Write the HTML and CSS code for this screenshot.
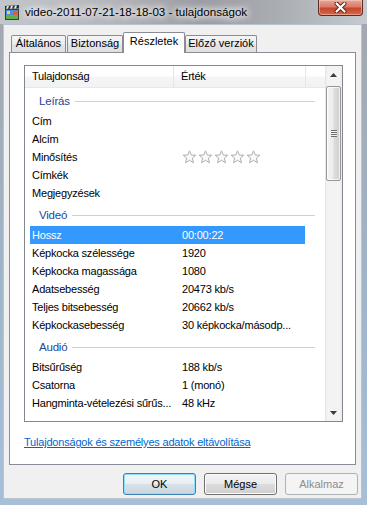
FILE: index.html
```html
<!DOCTYPE html>
<html lang="hu">

<head>
  <meta charset="UTF-8">
  <title>video-2011-07-21-18-18-03 - tulajdonságok</title>
  <link rel="stylesheet" href="styles.css">
</head>

<body>
  <div class="window">

    <div class="titlebar">
      <svg class="app-icon" width="16" height="16" viewBox="0 0 16 16">
        <rect x="1" y="4" width="14" height="11" fill="#3b3b3b"/>
        <rect x="2" y="5" width="12" height="9" fill="#4f8fd8"/>
        <rect x="2" y="10" width="12" height="4" fill="#5fb04a"/>
        <rect x="3" y="6" width="3" height="3" fill="#f3d04a"/>
        <rect x="9" y="7" width="4" height="3" fill="#e45a3a"/>
        <polygon points="1,1 15,0 15,3.5 1,4" fill="#2e2e2e"/>
        <polygon points="3,1 5,1 4,3.8 2,3.8" fill="#e8e8e8"/>
        <polygon points="7,0.8 9,0.7 8,3.7 6,3.7" fill="#e8e8e8"/>
        <polygon points="11,0.5 13,0.4 12,3.6 10,3.6" fill="#e8e8e8"/>
      </svg>
      <span class="title">video-2011-07-21-18-18-03 - tulajdonságok</span>
      <div class="close-btn">
        <svg width="13" height="11" viewBox="0 0 13 11">
          <path d="M2.5 1.5 L10.5 9.5 M10.5 1.5 L2.5 9.5" stroke="#5a2018" stroke-width="4" stroke-linecap="round"/>
          <path d="M2.5 1.5 L10.5 9.5 M10.5 1.5 L2.5 9.5" stroke="#ffffff" stroke-width="2.2" stroke-linecap="round"/>
        </svg>
      </div>
    </div>

    <div class="client">
      <div class="tabs">
        <div class="tab tab-general">Általános</div>
        <div class="tab tab-security">Biztonság</div>
        <div class="tab tab-details active">Részletek</div>
        <div class="tab tab-versions">Előző verziók</div>
      </div>

      <div class="pane">
        <div class="listbox">
          <div class="list">
            <div class="list-header">
              <div class="head-name">Tulajdonság</div>
              <div class="head-value">Érték</div>
              <div class="head-rest"></div>
            </div>

            <div class="group">Leírás</div>
            <div class="row"><div class="name">Cím</div><div class="value"></div></div>
            <div class="row"><div class="name">Alcím</div><div class="value"></div></div>
            <div class="row">
              <div class="name">Minősítés</div>
              <div class="value stars">
                <svg width="15" height="14" viewBox="0 0 15 14"><polygon class="star" points="7.5,0.8 9.3,5 13.8,5.2 10.3,8.1 11.5,12.8 7.5,10.2 3.5,12.8 4.7,8.1 1.2,5.2 5.7,5"/></svg>
                <svg width="15" height="14" viewBox="0 0 15 14"><polygon class="star" points="7.5,0.8 9.3,5 13.8,5.2 10.3,8.1 11.5,12.8 7.5,10.2 3.5,12.8 4.7,8.1 1.2,5.2 5.7,5"/></svg>
                <svg width="15" height="14" viewBox="0 0 15 14"><polygon class="star" points="7.5,0.8 9.3,5 13.8,5.2 10.3,8.1 11.5,12.8 7.5,10.2 3.5,12.8 4.7,8.1 1.2,5.2 5.7,5"/></svg>
                <svg width="15" height="14" viewBox="0 0 15 14"><polygon class="star" points="7.5,0.8 9.3,5 13.8,5.2 10.3,8.1 11.5,12.8 7.5,10.2 3.5,12.8 4.7,8.1 1.2,5.2 5.7,5"/></svg>
                <svg width="15" height="14" viewBox="0 0 15 14"><polygon class="star" points="7.5,0.8 9.3,5 13.8,5.2 10.3,8.1 11.5,12.8 7.5,10.2 3.5,12.8 4.7,8.1 1.2,5.2 5.7,5"/></svg>
              </div>
            </div>
            <div class="row"><div class="name">Címkék</div><div class="value"></div></div>
            <div class="row"><div class="name">Megjegyzések</div><div class="value"></div></div>

            <div class="group">Videó</div>
            <div class="row selected"><div class="name">Hossz</div><div class="value">00:00:22</div></div>
            <div class="row"><div class="name">Képkocka szélessége</div><div class="value">1920</div></div>
            <div class="row"><div class="name">Képkocka magassága</div><div class="value">1080</div></div>
            <div class="row"><div class="name">Adatsebesség</div><div class="value">20473 kb/s</div></div>
            <div class="row"><div class="name">Teljes bitsebesség</div><div class="value">20662 kb/s</div></div>
            <div class="row"><div class="name">Képkockasebesség</div><div class="value">30 képkocka/másodp...</div></div>

            <div class="group">Audió</div>
            <div class="row"><div class="name">Bitsűrűség</div><div class="value">188 kb/s</div></div>
            <div class="row"><div class="name">Csatorna</div><div class="value">1 (monó)</div></div>
            <div class="row"><div class="name">Hangminta-vételezési sűrűs...</div><div class="value">48 kHz</div></div>

            <div class="group">Média</div>
          </div>

          <div class="scrollbar">
            <div class="arrow-btn">
              <svg width="7" height="4" viewBox="0 0 7 4"><polygon points="3.5,0 7,4 0,4" fill="#3c3c3c"/></svg>
            </div>
            <div class="thumb"><div class="grip"></div></div>
            <div class="track"></div>
            <div class="arrow-btn">
              <svg width="7" height="4" viewBox="0 0 7 4"><polygon points="0,0 7,0 3.5,4" fill="#3c3c3c"/></svg>
            </div>
          </div>
        </div>

        <a class="remove-link" href="#">Tulajdonságok és személyes adatok eltávolítása</a>
      </div>

      <div class="buttons">
        <button class="btn btn-default">OK</button>
        <button class="btn">Mégse</button>
        <button class="btn" disabled>Alkalmaz</button>
      </div>
    </div>

  </div>
</body>

</html>
```

FILE: styles.css
```css
* {
  box-sizing: border-box;
}

body {
  margin: 0;
  width: 367px;
  height: 505px;
  overflow: hidden;
  font-family: "Liberation Sans", Arial, sans-serif;
  font-size: 11px;
  color: #000;
  background: linear-gradient(to bottom, #a9acb2 0, #a3a8b0 24px, #9fb6cc 60%, #a7c0d8 100%);
}

.window {
  height: 505px;
  display: flex;
  flex-direction: column;
}

/* Title bar (Aero glass) */
.titlebar {
  height: 24px;
  display: flex;
  align-items: flex-start;
  background: linear-gradient(to right, #c3c6cb 0%, #b4b6ba 30%, #9c9da2 55%, #a9acb1 75%, #c6cace 100%);
}

.app-icon {
  margin: 5px 0 0 4px;
  flex-shrink: 0;
}

.title {
  margin: 4px 0 0 5px;
  line-height: 15px;
  font-size: 11.6px;
  color: #000;
  text-shadow: 0 0 6px #fff, 0 0 8px #fff, 0 0 10px #fff;
}

.close-btn {
  margin-left: auto;
  margin-right: 4px;
  width: 45px;
  height: 16px;
  display: flex;
  align-items: center;
  justify-content: center;
  border: 1px solid #5e2a22;
  border-top: none;
  border-radius: 0 0 4px 4px;
  background: linear-gradient(to bottom, #e9a899 0%, #d87a66 45%, #c7452d 55%, #d4684a 100%);
  box-shadow: inset 0 0 0 1px rgba(255, 210, 200, 0.5);
}

/* Client area */
.client {
  margin: 0 5px 0 3px;
  height: 475px;
  border: 1px solid #b8c4d0;
  background: #f0f0f0;
}

.tabs {
  height: 27px;
  padding-left: 7px;
  display: flex;
  align-items: flex-end;
}

.tab {
  height: 17px;
  line-height: 15px;
  text-align: center;
  border: 1px solid #898c95;
  border-bottom: none;
  border-radius: 2px 2px 0 0;
  background: linear-gradient(to bottom, #f6f6f6 0%, #ececec 50%, #e4e4e4 51%, #e0e0e0 100%);
  white-space: nowrap;
}

.tab-general {
  width: 55px;
  margin-right: 1px;
}

.tab-security {
  width: 56px;
}

.tab-details {
  width: 62px;
}

.tab-versions {
  width: 72px;
}

.tab.active {
  height: 21px;
  line-height: 17px;
  margin-bottom: -1px;
  position: relative;
  z-index: 1;
  background: #fff;
}

.pane {
  margin-left: 5px;
  width: 347px;
  height: 413px;
  border: 1px solid #898c95;
  background: #fff;
  padding: 12px 0 0 14px;
}

/* Property list */
.listbox {
  width: 319px;
  height: 357px;
  border: 1px solid #828790;
  display: flex;
  overflow: hidden;
}

.list {
  width: 300px;
  overflow: hidden;
  letter-spacing: -0.2px;
}

.list-header {
  height: 22px;
  display: flex;
  line-height: 21px;
  background: linear-gradient(to bottom, #ffffff 0%, #ffffff 45%, #f4f5f7 55%, #f1f2f4 100%);
  border-bottom: 1px solid #e5e8ec;
}

.head-name {
  width: 149px;
  padding-left: 7px;
  border-right: 1px solid #e3e5e8;
}

.head-value {
  width: 132px;
  padding-left: 7px;
  border-right: 1px solid #e3e5e8;
}

.head-rest {
  flex: 1;
}

.group {
  height: 24px;
  padding-left: 14px;
  padding-top: 2px;
  display: flex;
  align-items: center;
  color: #24469a;
  font-size: 11.5px;
}

.group::after {
  content: "";
  flex: 1;
  height: 1px;
  margin: 1px 10px 0 5px;
  background: #c9d2de;
}

.row {
  height: 18px;
  line-height: 18px;
  margin-left: 5px;
  width: 275px;
  display: flex;
  white-space: nowrap;
}

.row .name {
  width: 151px;
  padding-left: 2px;
  overflow: hidden;
}

.row .value {
  flex: 1;
  padding-left: 1px;
  overflow: hidden;
}

.row.selected {
  background: #3399ff;
  color: #fff;
}

.stars {
  display: flex;
  align-items: center;
  gap: 1px;
}

.star {
  fill: #fbfbfb;
  stroke: #adadad;
  stroke-width: 1;
}

/* Scrollbar */
.scrollbar {
  width: 17px;
  display: flex;
  flex-direction: column;
  background: linear-gradient(to right, #e2e2e2 0, #f3f3f3 2px, #f3f3f3 15px, #e9e9e9 17px);
}

.arrow-btn {
  height: 17px;
  display: flex;
  align-items: center;
  justify-content: center;
}

.thumb {
  height: 95px;
  margin: 3px 1px 0;
  border: 1px solid #979797;
  border-radius: 2px;
  background: linear-gradient(to right, #f4f4f4 0%, #ececec 45%, #dcdcdc 55%, #d0d0d0 100%);
  box-shadow: inset 0 0 0 1px rgba(255, 255, 255, 0.7);
  display: flex;
  align-items: center;
  justify-content: center;
}

.grip {
  width: 6px;
  height: 7px;
  background: repeating-linear-gradient(to bottom, #6e6e6e 0, #6e6e6e 1px, #f2f2f2 1px, #f2f2f2 2px);
}

.track {
  flex: 1;
}

.remove-link {
  display: inline-block;
  margin-top: 13px;
  line-height: 14px;
  letter-spacing: -0.2px;
  color: #0066cc;
  text-decoration: underline;
}

/* Dialog buttons */
.buttons {
  margin-top: 8px;
  padding-right: 3px;
  display: flex;
  justify-content: flex-end;
  gap: 8px;
}

.btn {
  width: 73px;
  height: 22px;
  padding: 0;
  font-family: "Liberation Sans", Arial, sans-serif;
  font-size: 11px;
  color: #000;
  border: 1px solid #707070;
  border-radius: 3px;
  background: linear-gradient(to bottom, #f2f2f2 0%, #ebebeb 50%, #dddddd 51%, #cfcfcf 100%);
  box-shadow: inset 0 0 0 1px #fcfcfc;
}

.btn-default {
  border-color: #3c7fb1;
  background: linear-gradient(to bottom, #f1f6f9 0%, #e8eef2 50%, #d7e1e8 51%, #cad6de 100%);
  box-shadow: inset 0 0 0 1px #8ee0fb;
}

.btn:disabled {
  color: #8d8d8d;
  border-color: #adb2b5;
  background: #f4f4f4;
  box-shadow: none;
}
```
